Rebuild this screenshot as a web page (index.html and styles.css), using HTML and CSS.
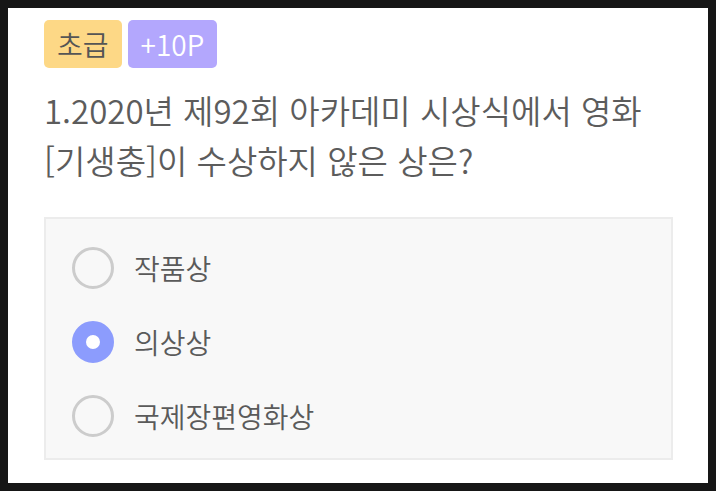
FILE: index.html
```html
<!DOCTYPE html>
<html lang="ko">
<head>
<meta charset="utf-8">
<link rel="stylesheet" href="styles.css">
</head>
<body>
<div class="card">
  <div class="badges">
    <span class="badge level">초급</span>
    <span class="badge point">+10P</span>
  </div>
  <p class="question">1.2020년 제92회 아카데미 시상식에서 영화 [기생충]이 수상하지 않은 상은?</p>
  <ul class="options">
    <li class="option"><span class="radio"></span><span class="label">작품상</span></li>
    <li class="option"><span class="radio checked"></span><span class="label">의상상</span></li>
    <li class="option"><span class="radio"></span><span class="label">국제장편영화상</span></li>
  </ul>
</div>
</body>
</html>
```
FILE: styles.css
```css
html { background: #161616; }
body {
  margin: 8px;
  font-family: "Noto Sans CJK KR", "Noto Sans", sans-serif;
  font-weight: 350;
  color: #5e5e5e;
}
.card {
  background: #fff;
  height: 475px;
  box-sizing: border-box;
  padding: 12px 35px 0 36px;
}
.badges { display: flex; gap: 6px; }
.badge {
  height: 48px;
  line-height: 48px;
  padding: 0 13px;
  border-radius: 5px;
  font-size: 28px;
}
.level { background: #fdd886; color: #555555; }
.point { background: #b3a7fd; color: #fff; }
.question {
  margin: 17px 0 32px;
  font-size: 33px;
  line-height: 50px;
  color: #5c5c5c;
}
.options {
  list-style: none;
  margin: 0;
  padding: 28px 26px 21px;
  background: #f8f8f8;
  border: 2px solid #ececec;
  display: flex;
  flex-direction: column;
  gap: 32px;
}
.option { display: flex; align-items: center; gap: 20px; height: 42px; }
.radio {
  width: 42px; height: 42px;
  box-sizing: border-box;
  border: 3px solid #cccccc;
  border-radius: 50%;
}
.radio.checked {
  border: 14px solid #8c9cfd;
  background: #fff;
}
.label { font-size: 28px; color: #5a5a5a; }
```
